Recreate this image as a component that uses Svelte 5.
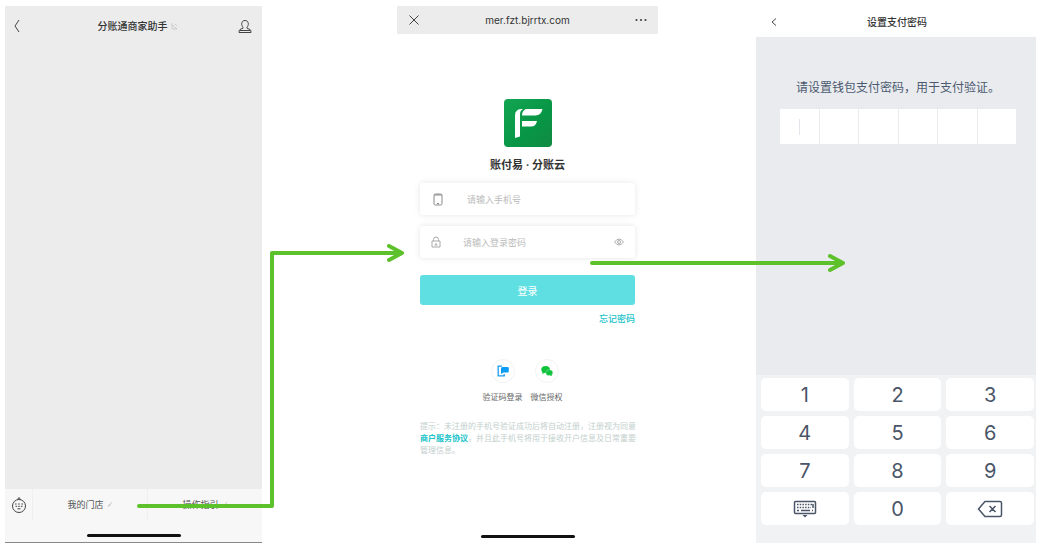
<script>
  const digits = ['1', '2', '3', '4', '5', '6', '7', '8', '9'];
  const cells = [0, 1, 2, 3, 4, 5];

  let phone = '';
  let password = '';
  let pin = '';

  function press(digit) {
    if (pin.length < cells.length) pin += digit;
  }

  function erase() {
    pin = pin.slice(0, -1);
  }
</script>

<main class="board">
  <section class="screen assistant">
    <header class="bar">
      <button class="icon" aria-label="返回">
        <svg width="8" height="14" viewBox="0 0 8 14"><path d="M6 1 2 7l4 6" /></svg>
      </button>
      <h1>
        分账通商家助手
        <svg class="mark" width="9" height="9" viewBox="0 0 9 9"><path d="M2 1v6h5L2 3M5 2l2 2" /></svg>
      </h1>
      <button class="icon" aria-label="我的">
        <svg width="14" height="15" viewBox="0 0 14 15">
          <path d="M5 8.2C3 6.500 3 1.500 7 1.500S11 6.500 9 8.200v1l3 1.300q1 .6 1 3H1q0-2.400 1-3l3-1.300zM1.500 11.500h11" />
        </svg>
      </button>
    </header>
    <div class="chat"></div>
    <footer>
      <nav>
        <button class="keyboard" aria-label="键盘">
          <svg width="16" height="18" viewBox="0 0 16 18">
            <circle cx="8" cy="10" r="6.500" />
            <path d="M6.500 3.500 8 1.500l1.500 2M4 8h1.600M7.200 8h1.600M10.400 8H12M4.500 10.300h1.600M7.200 10.300h1.600M9.900 10.300h1.600M6.500 12.800h3" />
          </svg>
        </button>
        <button>我的门店 <svg class="mark" width="6" height="7" viewBox="0 0 6 7"><path d="M1 6l4-5M1 4h3" /></svg></button>
        <button>操作指引 <svg class="mark" width="6" height="7" viewBox="0 0 6 7"><path d="M1 6l4-5M1 4h3" /></svg></button>
      </nav>
      <div class="home"></div>
    </footer>
  </section>

  <section class="screen login">
    <header class="bar">
      <button class="icon" aria-label="关闭">
        <svg width="12" height="12" viewBox="0 0 12 12"><path d="M1.500 1.500l9 9M10.500 1.500l-9 9" /></svg>
      </button>
      <span class="url">mer.fzt.bjrrtx.com</span>
      <button class="icon" aria-label="更多">
        <svg class="dots" width="12" height="4" viewBox="0 0 12 4">
          <circle cx="1.500" cy="2" r="1.100" /><circle cx="6" cy="2" r="1.100" /><circle cx="10.500" cy="2" r="1.100" />
        </svg>
      </button>
    </header>

    <form on:submit|preventDefault>
      <svg class="logo" width="48" height="48" viewBox="0 0 48 48">
        <defs>
          <linearGradient id="leaf" x1="0" y1="0" x2="1" y2="1">
            <stop offset="0" stop-color="#14a552" />
            <stop offset=".55" stop-color="#079746" />
            <stop offset="1" stop-color="#118a43" />
          </linearGradient>
        </defs>
        <rect width="48" height="48" rx="4" fill="url(#leaf)" />
        <path fill="#fff" d="M17 10h2q-3 1.500-3 5v22.500l-5 1.500V16.500q0-6 6-6.500z" />
        <path fill="#fff" d="M22 10h16.500q-1.500 6.500-7 6.500H18q0-5 4-6.500zM18 22h15q-1 5.500-6 5.500h-9z" />
      </svg>
      <h2>账付易 · 分账云</h2>

      <label class="field phone">
        <svg width="10" height="13" viewBox="0 0 10 13"><rect x="1" y="1" width="8" height="11" rx="1.500" /><path d="M1 2h8M4 10.500h2" /></svg>
        <input type="tel" placeholder="请输入手机号" aria-label="手机号" bind:value={phone} />
      </label>
      <label class="field password">
        <svg width="10" height="12" viewBox="0 0 10 12"><path d="M1 5h8v6H1zM2.500 5V3.500q0-2.500 2.500-2.500t2.500 2.500V5M5 7v2M3.500 9h3" /></svg>
        <input type="password" placeholder="请输入登录密码" aria-label="登录密码" bind:value={password} />
        <svg width="10" height="8" viewBox="0 0 10 8"><path d="M.5 4q4.500-6 9 0-4.500 6-9 0z" /><circle cx="5" cy="4" r="1.500" /></svg>
      </label>

      <button class="submit">登录</button>
      <a class="forgot" href="#forgot">忘记密码</a>

      <div class="others">
        <button type="button">
          <span class="round">
            <svg width="12" height="12" viewBox="0 0 12 12">
              <path fill="none" stroke="#1c9cf0" stroke-width="1.300" d="M5 1.200H1.200v9.600h6V9" />
              <path fill="#0b9df5" d="M5.500 2h5q1.300 0 1.300 1.300v3q0 1.300-1.300 1.300H6.500L4 9V3.500Q4 2 5.500 2z" />
            </svg>
          </span>
          验证码登录
        </button>
        <button type="button">
          <span class="round">
            <svg width="12" height="12" viewBox="0 0 12 12" fill="#10c33c">
              <ellipse cx="4.600" cy="4.500" rx="4.300" ry="3.500" />
              <path d="M1.500 6.500 1.300 9l2.500-1.200z" />
              <ellipse cx="8.300" cy="7.700" rx="3.500" ry="2.900" stroke="#fff" stroke-width=".3" />
              <path d="M9 10l1.800 1.200-.3-2z" />
            </svg>
          </span>
          微信授权
        </button>
      </div>

      <p class="terms">
        提示&#xFF1A;未注册的手机号验证成功后将自动注册&#xFF0C;注册视为同意<br />
        <a href="#agreement">商户服务协议</a>&#xFF0C;并且此手机号将用于接收开户信息及日常重要<br />
        管理信息。
      </p>
    </form>
    <div class="home"></div>
  </section>

  <section class="screen wallet">
    <header class="bar">
      <button class="icon" aria-label="返回">
        <svg width="8" height="10" viewBox="0 0 8 10"><path d="M6 1.500 2 5l4 3.500" /></svg>
      </button>
      <h1>设置支付密码</h1>
    </header>
    <div class="setup">
      <p>请设置钱包支付密码&#xFF0C;用于支付验证。</p>
      <div class="cells">
        {#each cells as i}
          <span class="cell" class:active={i === pin.length}>{i < pin.length ? '•' : ''}</span>
        {/each}
      </div>
    </div>
    <div class="keypad">
      {#each digits as digit}
        <button on:click={() => press(digit)}>{digit}</button>
      {/each}
      <button aria-label="收起键盘">
        <svg width="24" height="18" viewBox="0 0 24 18">
          <rect x="1.500" y="1.500" width="21" height="12" rx="1" />
          <path stroke-dasharray="1.500 1.200" d="M4 4.500h16M4 7.500h14" />
          <path d="M4 10.500h2M8 10.500h9M19 10.500h1M20 4v4" />
          <path class="solid" d="M9.500 15h5L12 17.500z" />
        </svg>
      </button>
      <button on:click={() => press('0')}>0</button>
      <button aria-label="删除" on:click={erase}>
        <svg width="26" height="18" viewBox="0 0 26 18">
          <path d="M8 1.500h15q1.500 0 1.500 1.500v12q0 1.500-1.500 1.500H8L1.500 9zM12.500 6l6 6M18.500 6l-6 6" />
        </svg>
      </button>
    </div>
  </section>

  <svg class="arrows" viewBox="0 0 1038 544" preserveAspectRatio="none">
    <path d="M139 506H272V253H400M389 246l13 7-13 7" />
    <path d="M592 263H841M830 256l13 7-13 7" />
  </svg>
</main>

<style>
  :global(body) {
    margin: 0;
    background: #fff;
  }

  .board {
    position: relative;
    box-sizing: border-box;
    display: grid;
    grid-template-columns: 257fr 135fr 261fr 98fr 280fr;
    min-height: 100vh;
    padding: 6px 2px 1px 5px;
    font-family: Inter, 'Noto Sans CJK SC', sans-serif;
    color: #333;
  }

  .screen {
    display: flex;
    flex-direction: column;
    min-width: 0;
  }
  .login {
    grid-column: 3;
  }
  .wallet {
    grid-column: 5;
  }

  h1,
  h2,
  p {
    margin: 0;
  }
  button {
    padding: 0;
    border: 0;
    background: none;
    font: inherit;
    color: inherit;
    cursor: pointer;
  }
  a {
    color: #20c3c9;
    text-decoration: none;
  }
  svg {
    display: block;
    flex: none;
  }

  .bar {
    display: grid;
    grid-template-columns: 24px 1fr 24px;
    align-items: center;
    text-align: center;
  }
  .bar h1 {
    display: flex;
    justify-content: center;
    align-items: center;
    gap: 2px;
    font-size: 10px;
    line-height: 16px;
    font-weight: 500;
  }
  .icon {
    display: grid;
    place-items: center;
  }
  .icon svg,
  .keyboard svg {
    fill: none;
    stroke: #444;
    stroke-width: 1;
  }
  .mark {
    fill: none;
    stroke: #ccc;
    stroke-width: 1;
  }
  .home {
    align-self: center;
    width: 94px;
    height: 3px;
    border-radius: 2px;
    background: #111;
  }

  .assistant {
    background: #ececec;
  }
  .assistant .bar {
    height: 40px;
    padding-right: 5px;
  }
  .assistant h1 {
    padding-left: 14px;
  }
  .chat {
    flex: 1;
  }
  .assistant footer {
    display: flex;
    flex-direction: column;
    height: 53px;
    border-bottom: 1px solid #888;
    background: #f7f7f7;
  }
  nav {
    display: grid;
    grid-template-columns: 27px 1fr 1fr;
    height: 31px;
    margin-bottom: 14px;
  }
  nav button {
    display: flex;
    justify-content: center;
    align-items: center;
    gap: 3px;
    font-size: 9px;
    color: #555;
  }
  nav button + button {
    border-left: 1px solid #efefef;
  }

  .login .bar {
    height: 28px;
    padding: 0 5px;
    background: #ececec;
  }
  .url {
    font-size: 10px;
  }
  .icon .dots {
    fill: #444;
    stroke: none;
  }
  form {
    display: flex;
    flex: 1;
    flex-direction: column;
    padding: 65px 23px 0;
  }
  .logo {
    align-self: center;
  }
  h2 {
    margin: 10px 0;
    font-size: 11px;
    line-height: 16px;
    font-weight: 700;
    text-align: center;
  }
  .field {
    display: flex;
    align-items: center;
    height: 32px;
    margin-bottom: 11px;
    border-radius: 3px;
    background: #fff;
    box-shadow: 0 0 6px rgba(0, 0, 0, 0.1);
  }
  .field.phone {
    gap: 24px;
    padding: 0 13px;
  }
  .field.password {
    gap: 22px;
    padding: 0 11px;
  }
  .field svg {
    fill: none;
    stroke: #aaa;
    stroke-width: 1;
  }
  .field.phone svg {
    stroke: #888;
  }
  .field input {
    flex: 1;
    min-width: 0;
    padding: 0;
    border: 0;
    outline: 0;
    background: none;
    font: inherit;
    font-size: 9px;
    color: #333;
  }
  .field input::placeholder {
    color: #bbb;
    opacity: 1;
  }
  .submit {
    height: 30px;
    margin-top: 6px;
    border-radius: 3px;
    background: #60dfe2;
    font-size: 10px;
    color: #fff;
  }
  .forgot {
    align-self: flex-end;
    margin-top: 6px;
    font-size: 9px;
    line-height: 16px;
    font-weight: 500;
  }
  .others {
    display: flex;
    justify-content: center;
    gap: 8px;
    margin-top: 32px;
    padding-right: 10px;
  }
  .others button {
    display: flex;
    flex-direction: column;
    align-items: center;
    gap: 8px;
    font-size: 8px;
    line-height: 12px;
    color: #666;
  }
  .round {
    display: grid;
    place-items: center;
    box-sizing: border-box;
    width: 24px;
    height: 24px;
    border: 1px solid #f3f3f3;
    border-radius: 50%;
  }
  .terms {
    margin-top: 17px;
    font-size: 8px;
    line-height: 12px;
    white-space: nowrap;
    color: #c3cfcd;
  }
  .terms a {
    font-weight: 700;
  }
  .login > .home {
    margin-bottom: 5px;
  }

  .wallet {
    background: #eaebef;
  }
  .wallet .bar {
    height: 31px;
    padding: 0 4px 0 6px;
    background: #fff;
  }
  .setup {
    flex: 1;
    padding: 42px 20px 0 24px;
    text-align: center;
  }
  .setup p {
    font-size: 12px;
    line-height: 18px;
    white-space: nowrap;
    color: #4a5a70;
  }
  .cells {
    display: grid;
    grid-template-columns: repeat(6, 1fr);
    gap: 1px;
    margin-top: 12px;
  }
  .cell {
    display: grid;
    place-items: center;
    height: 35px;
    background: #fff;
  }
  .cell.active::before {
    content: '';
    width: 1px;
    height: 16px;
    background: #e2e5ea;
  }
  .keypad {
    display: grid;
    grid-template-columns: repeat(3, 1fr);
    grid-auto-rows: 33px;
    gap: 5px;
    padding: 3px 2px 18px 5px;
    background: #f1f2f4;
  }
  .keypad button {
    display: grid;
    place-items: center;
    border-radius: 5px;
    background: #fff;
    font-size: 20px;
    color: #4a5568;
  }
  .keypad svg {
    fill: none;
    stroke: #4a5568;
    stroke-width: 1.5px;
  }
  .keypad .solid {
    fill: #4a5568;
    stroke: none;
  }

  .arrows {
    position: absolute;
    inset: 0;
    width: 100%;
    height: 100%;
    fill: none;
    stroke: #5dc12b;
    stroke-width: 4;
    stroke-linecap: round;
    stroke-linejoin: round;
    pointer-events: none;
  }
</style>
